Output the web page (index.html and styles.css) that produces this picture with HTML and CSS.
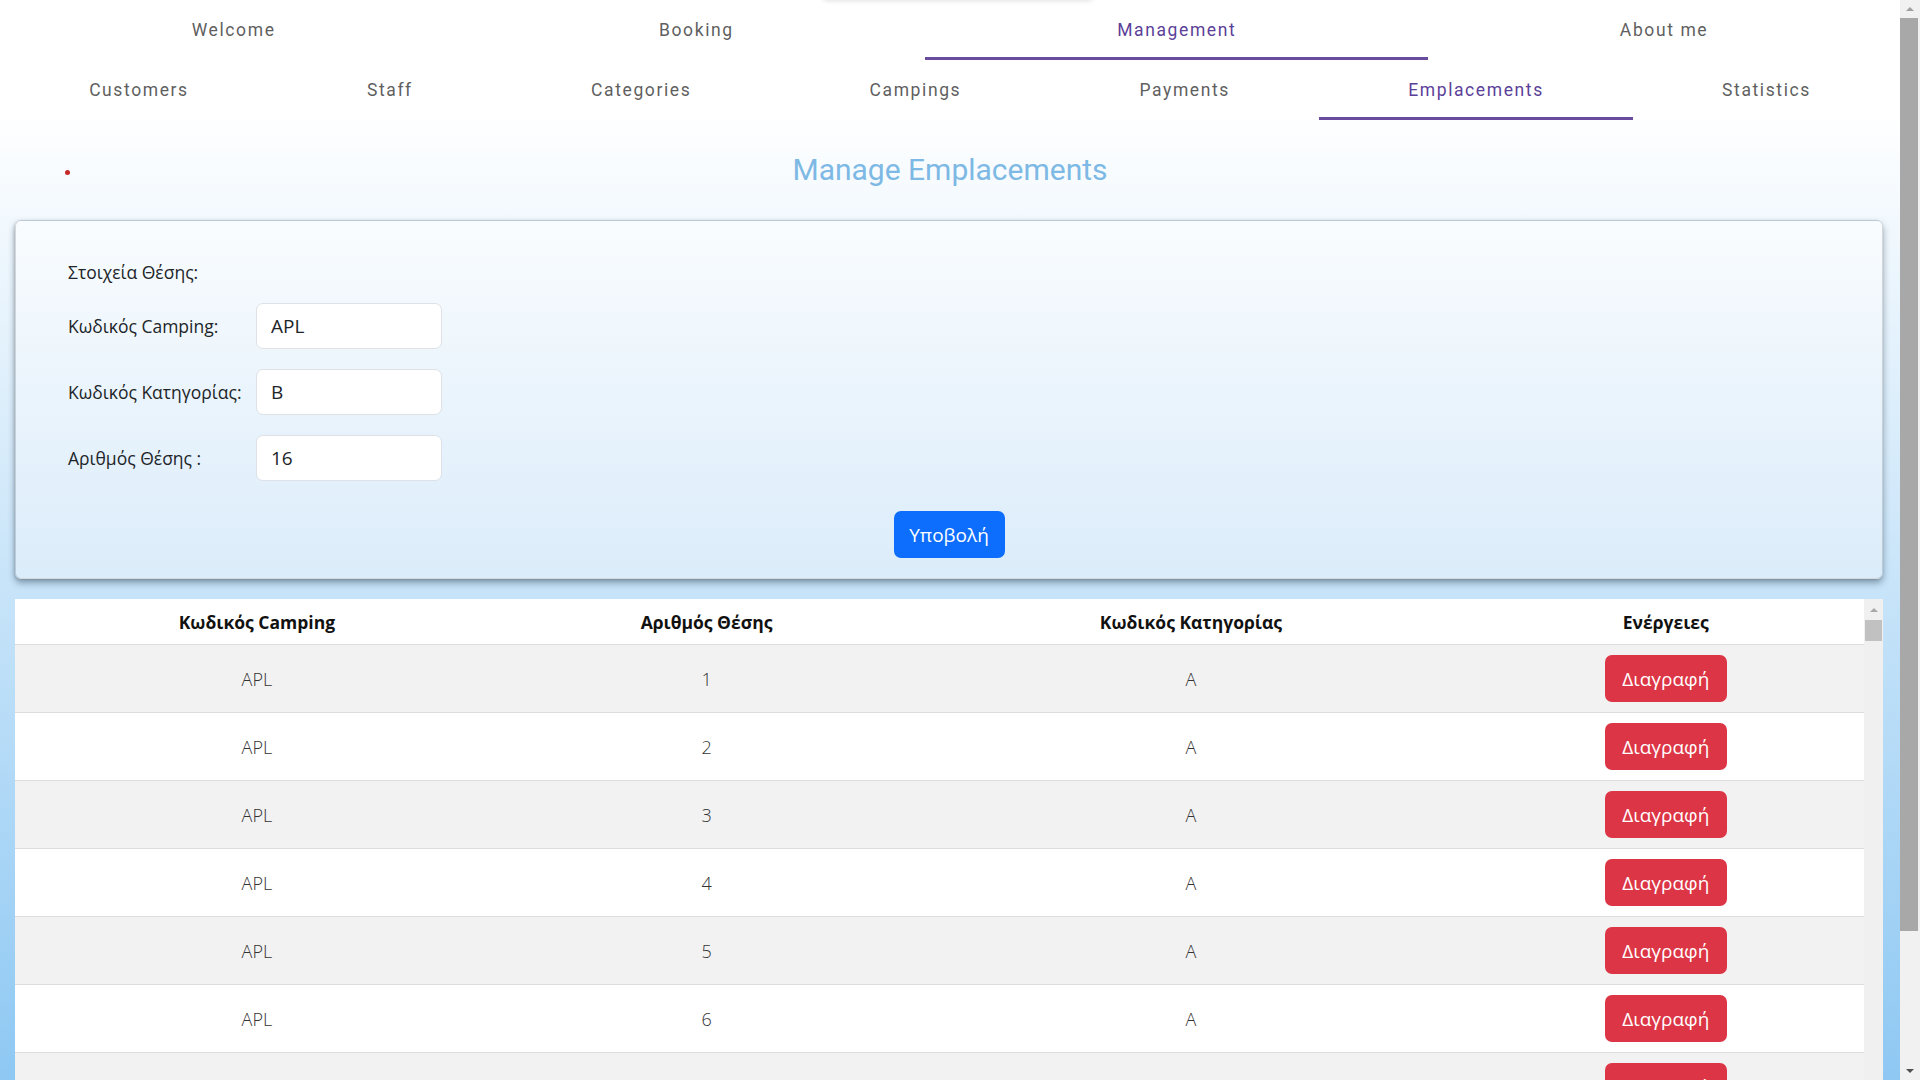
FILE: index.html
```html
<!DOCTYPE html>
<html lang="el">
<head>
<meta charset="utf-8">
<title>Manage Emplacements</title>
<link rel="stylesheet" href="styles.css">
</head>
<body>
<div class="page">
  <div class="top-ghost"></div>
  <nav class="tabs">
    <a class="tab">Welcome</a>
    <a class="tab">Booking</a>
    <a class="tab active">Management</a>
    <a class="tab">About me</a>
  </nav>
  <nav class="tabs">
    <a class="tab">Customers</a>
    <a class="tab">Staff</a>
    <a class="tab">Categories</a>
    <a class="tab">Campings</a>
    <a class="tab">Payments</a>
    <a class="tab active">Emplacements</a>
    <a class="tab">Statistics</a>
  </nav>

  <div class="title-row">
    <div class="dot-cell"><span class="dot"></span></div>
    <h2 class="title">Manage Emplacements</h2>
    <div></div>
  </div>

  <form class="card">
    <div class="section-label">Στοιχεία Θέσης:</div>
    <div class="form-row">
      <label class="lbl">Κωδικός Camping:</label>
      <input class="field" type="text" value="APL">
    </div>
    <div class="form-row">
      <label class="lbl">Κωδικός Κατηγορίας:</label>
      <input class="field" type="text" value="B">
    </div>
    <div class="form-row">
      <label class="lbl">Αριθμός Θέσης :</label>
      <input class="field" type="text" value="16">
    </div>
    <div class="submit-row">
      <button type="button" class="btn btn-primary">Υποβολή</button>
    </div>
  </form>

  <div class="table-wrap">
    <div class="table-scroll">
      <table class="grid">
        <thead>
          <tr>
            <th class="c1">Κωδικός Camping</th>
            <th class="c2">Αριθμός Θέσης</th>
            <th class="c3">Κωδικός Κατηγορίας</th>
            <th class="c4">Ενέργειες</th>
          </tr>
        </thead>
        <tbody>
          <tr><td>APL</td><td>1</td><td>A</td><td><button type="button" class="btn btn-danger">Διαγραφή</button></td></tr>
          <tr><td>APL</td><td>2</td><td>A</td><td><button type="button" class="btn btn-danger">Διαγραφή</button></td></tr>
          <tr><td>APL</td><td>3</td><td>A</td><td><button type="button" class="btn btn-danger">Διαγραφή</button></td></tr>
          <tr><td>APL</td><td>4</td><td>A</td><td><button type="button" class="btn btn-danger">Διαγραφή</button></td></tr>
          <tr><td>APL</td><td>5</td><td>A</td><td><button type="button" class="btn btn-danger">Διαγραφή</button></td></tr>
          <tr><td>APL</td><td>6</td><td>A</td><td><button type="button" class="btn btn-danger">Διαγραφή</button></td></tr>
          <tr><td>APL</td><td>7</td><td>A</td><td><button type="button" class="btn btn-danger">Διαγραφή</button></td></tr>
          <tr><td>APL</td><td>8</td><td>A</td><td><button type="button" class="btn btn-danger">Διαγραφή</button></td></tr>
        </tbody>
      </table>
    </div>
    <div class="iscroll">
      <div class="sb-btn"><span class="tri-up small"></span></div>
      <div class="ithumb"></div>
    </div>
  </div>
</div>

<div class="vscroll">
  <div class="sb-btn tall"><span class="tri-up"></span></div>
  <div class="vthumb"></div>
  <div class="vtrack"></div>
  <div class="sb-btn tall"><span class="tri-down"></span></div>
</div>
</body>
</html>
```

FILE: styles.css
```css
html, body {
  margin: 0;
  padding: 0;
  height: 100%;
  overflow: hidden;
}

body {
  display: flex;
  font-family: "Open Sans", "Liberation Sans", sans-serif;
  color: #212529;
}

.page {
  position: relative;
  flex: 1 1 auto;
  min-width: 0;
  height: 100%;
  overflow: hidden;
  background: linear-gradient(to bottom, #ffffff 0px, #ffffff 110px, #8ec8f3 1080px);
}

.top-ghost {
  position: absolute;
  left: 822px;
  top: -40px;
  width: 272px;
  height: 40px;
  border-radius: 6px;
  background: #fff;
  box-shadow: 0 1px 5px rgba(0, 0, 0, 0.12);
}

/* ---------- Tabs ---------- */
.tabs {
  display: flex;
  height: 60px;
  background: #ffffff;
}

.tab {
  flex: 1 1 auto;
  display: flex;
  align-items: center;
  justify-content: center;
  padding: 0 20px;
  font-family: Roboto, "Liberation Sans", sans-serif;
  font-size: 17.5px;
  font-weight: 400;
  letter-spacing: 1.6px;
  color: #5f5f5f;
  cursor: pointer;
}

.tab.active {
  color: #5b3f98;
  box-shadow: inset 0 -3px 0 #6a4c9f;
}

/* ---------- Title ---------- */
.title-row {
  display: grid;
  grid-template-columns: 1fr auto 1fr;
  align-items: center;
  padding: 32px 0 32px;
}

.dot-cell {
  padding-left: 65px;
  display: flex;
  align-items: center;
  padding-top: 4px;
}

.dot {
  width: 5px;
  height: 5px;
  border-radius: 50%;
  background: #c62828;
}

.title {
  margin: 0;
  font-family: Roboto, "Liberation Sans", sans-serif;
  font-weight: 400;
  font-size: 30px;
  line-height: 36px;
  color: #7db9e4;
}

/* ---------- Card ---------- */
.card {
  margin: 0 17px 0 15px;
  padding: 36px 52px 20px;
  border: 1px solid rgba(0, 0, 0, 0.14);
  border-radius: 6px;
  background: linear-gradient(to bottom, #f9fcfe 0%, #dbecfa 100%);
  box-shadow: 0 4px 7px rgba(40, 60, 80, 0.45), -1px 1px 3px rgba(0, 0, 0, 0.12);
}

.section-label {
  font-size: 17.5px;
  line-height: 30px;
  margin-bottom: 16px;
}

.form-row {
  display: flex;
  align-items: center;
  margin-bottom: 20px;
}

.lbl {
  width: 188px;
  flex: 0 0 188px;
  font-size: 17.5px;
}

.field {
  box-sizing: border-box;
  width: 186px;
  height: 46px;
  padding: 0 14px;
  border: 1px solid #dee2e6;
  border-radius: 7px;
  background: #ffffff;
  font-family: "Open Sans", "Liberation Sans", sans-serif;
  font-size: 19px;
  color: #212529;
  outline: none;
}

.submit-row {
  display: flex;
  justify-content: center;
  padding-top: 10px;
}

.btn {
  box-sizing: border-box;
  height: 47px;
  padding: 0 12px;
  border: none;
  border-radius: 7px;
  font-family: "Open Sans", "Liberation Sans", sans-serif;
  font-size: 19px;
  color: #ffffff;
  cursor: pointer;
}

.btn-primary {
  width: 111px;
  background: #0d6efd;
}

.btn-danger {
  width: 122px;
  background: #dc3545;
}

/* ---------- Table ---------- */
.table-wrap {
  display: flex;
  margin: 20px 17px 0 15px;
}

.table-scroll {
  flex: 1 1 auto;
  min-width: 0;
}

.grid {
  width: 100%;
  border-collapse: collapse;
  background: #ffffff;
}

.grid th {
  height: 45px;
  padding: 0 10px;
  font-size: 17.5px;
  font-weight: 700;
  color: #111;
  text-align: center;
  vertical-align: middle;
}

.grid .c1 { width: 486px; }
.grid .c2 { width: 414px; }
.grid .c3 { width: 558px; }
.grid .c4 { width: 391px; }

.grid td {
  height: 67px;
  padding: 0 10px;
  border-top: 1px solid #dcdcdc;
  text-align: center;
  vertical-align: middle;
  font-size: 18px;
  font-weight: 300;
  color: #333;
}

.grid tbody tr:nth-child(odd) td {
  background: #f2f2f2;
}

/* ---------- Scrollbars ---------- */
.iscroll {
  flex: 0 0 19px;
  display: flex;
  flex-direction: column;
  background: #f0f0f0;
}

.sb-btn {
  height: 21px;
  display: flex;
  align-items: center;
  justify-content: center;
}

.sb-btn.tall {
  height: 18px;
}

.ithumb {
  height: 21px;
  margin: 0 1px;
  background: #c1c1c1;
}

.tri-up {
  width: 0;
  height: 0;
  border-left: 4px solid transparent;
  border-right: 4px solid transparent;
  border-bottom: 4px solid #a0a0a0;
}

.tri-up.small {
  border-bottom-color: #a8a8a8;
}

.tri-down {
  width: 0;
  height: 0;
  border-left: 4px solid transparent;
  border-right: 4px solid transparent;
  border-top: 4px solid #505050;
}

.vscroll {
  flex: 0 0 20px;
  display: flex;
  flex-direction: column;
  height: 100%;
  background: #f1f1f1;
}

.vthumb {
  height: 913px;
  margin: 0 2px 0 0;
  background: #a8a8a8;
}

.vtrack {
  flex: 1 1 auto;
}
```
